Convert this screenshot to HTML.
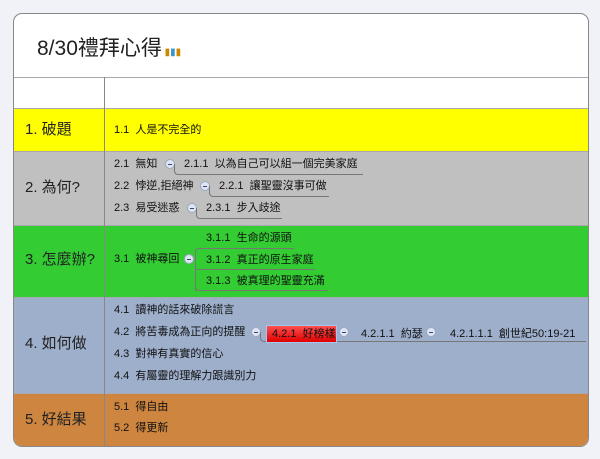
<!DOCTYPE html>
<html><head><meta charset="utf-8"><style>
body{margin:0;width:600px;height:459px;background:#f1f2f7;font-family:"Liberation Sans","Noto Sans CJK TC",sans-serif;position:relative;overflow:hidden;color:#111}
.card{position:absolute;left:13px;top:13px;width:574px;height:432px;border:1px solid #888;border-radius:9px;background:#fff;overflow:hidden}
.row{position:absolute;left:0;width:574px;border-top:1px solid #a8a8b0}
.div{position:absolute;left:90px;top:63px;bottom:0;border-left:1px solid #888}
.t{position:absolute;font-size:11px;line-height:14px;white-space:nowrap}
.L{position:absolute;left:11px;font-size:15px;line-height:18px;color:#222;white-space:nowrap}
.m{position:absolute;width:8px;height:8px;border-radius:50%;background:#dde4f5;border:1px solid #9ab}
.m:after{content:"";position:absolute;left:2px;top:3.5px;width:4px;height:1px;background:#446}
.c{position:absolute;border-bottom:1px solid #777;border-left:1px solid #777;border-bottom-left-radius:4px}
.h{position:absolute;border-top:1px solid #777}
</style></head><body>
<div class="card">
<div class="t" style="left:23px;top:22px;font-size:21px;line-height:26px;color:#222">8/30禮拜心得<span style="font-size:10px;color:#c80"> ▮<span style="color:#39c">▮</span>▮</span></div>
<div class="row" style="top:63px;height:30px;background:#fff"></div>
<div class="row" style="top:94px;height:42px;background:#ffff00"></div>
<div class="row" style="top:137px;height:73px;background:#c0c0c0"></div>
<div class="row" style="top:211px;height:71px;background:#33cc33"></div>
<div class="row" style="top:283px;height:95px;background:#9eafcc"></div>
<div class="row" style="top:379px;height:60px;background:#cd853f"></div>
<div class="div"></div>

<div class="L" style="top:107px">1. 破題</div>
<div class="L" style="top:165px">2. 為何?</div>
<div class="L" style="top:237px">3. 怎麼辦?</div>
<div class="L" style="top:321px">4. 如何做</div>
<div class="L" style="top:397px">5. 好結果</div>

<div class="t" style="left:100px;top:109px">1.1&nbsp; 人是不完全的</div>

<div class="t" style="left:100px;top:143px">2.1&nbsp; 無知</div>
<div class="m" style="left:151px;top:145px"></div>
<div class="c" style="left:160px;top:150px;width:188px;height:10px"></div>
<div class="t" style="left:170px;top:143px">2.1.1&nbsp; 以為自己可以組一個完美家庭</div>
<div class="t" style="left:100px;top:165px">2.2&nbsp; 悖逆,拒絕神</div>
<div class="m" style="left:186px;top:167px"></div>
<div class="c" style="left:195px;top:172px;width:119px;height:10px"></div>
<div class="t" style="left:205px;top:165px">2.2.1&nbsp; 讓聖靈沒事可做</div>
<div class="t" style="left:100px;top:187px">2.3&nbsp; 易受迷惑</div>
<div class="m" style="left:173px;top:189px"></div>
<div class="c" style="left:182px;top:194px;width:85px;height:10px"></div>
<div class="t" style="left:192px;top:187px">2.3.1&nbsp; 步入歧途</div>

<div class="t" style="left:100px;top:238px">3.1&nbsp; 被神尋回</div>
<div class="m" style="left:170px;top:240px"></div>
<div style="position:absolute;left:181px;top:234px;width:98px;height:42px;border-left:1px solid #777;border-top:1px solid #777;border-radius:4px 0 0 0"></div>
<div class="h" style="left:181px;top:255px;width:120px"></div>
<div class="c" style="left:181px;top:255px;width:132px;height:21px"></div>
<div class="t" style="left:192px;top:217px">3.1.1&nbsp; 生命的源頭</div>
<div class="t" style="left:192px;top:239px">3.1.2&nbsp; 真正的原生家庭</div>
<div class="t" style="left:192px;top:260px">3.1.3&nbsp; 被真理的聖靈充滿</div>

<div class="t" style="left:100px;top:289px">4.1&nbsp; 讀神的話來破除謊言</div>
<div class="t" style="left:100px;top:311px">4.2&nbsp; 將苦毒成為正向的提醒</div>
<div class="m" style="left:237px;top:313px"></div>
<div class="c" style="left:246px;top:318px;width:325px;height:9px"></div>
<div style="position:absolute;left:252px;top:311px;width:71px;height:18px;background:linear-gradient(#ff5050,#e00000);border:1px solid #a0c8f0;box-sizing:border-box"></div>
<div class="t" style="left:258px;top:313px">4.2.1&nbsp; 好榜樣</div>
<div class="m" style="left:325px;top:313px"></div>
<div class="t" style="left:347px;top:313px">4.2.1.1&nbsp; 約瑟</div>
<div class="m" style="left:412px;top:313px"></div>
<div class="t" style="left:436px;top:313px">4.2.1.1.1&nbsp; 創世紀50:19-21</div>
<div class="t" style="left:100px;top:333px">4.3&nbsp; 對神有真實的信心</div>
<div class="t" style="left:100px;top:355px">4.4&nbsp; 有屬靈的理解力跟識別力</div>

<div class="t" style="left:100px;top:386px">5.1&nbsp; 得自由</div>
<div class="t" style="left:100px;top:407px">5.2&nbsp; 得更新</div>
</div>
</body></html>
